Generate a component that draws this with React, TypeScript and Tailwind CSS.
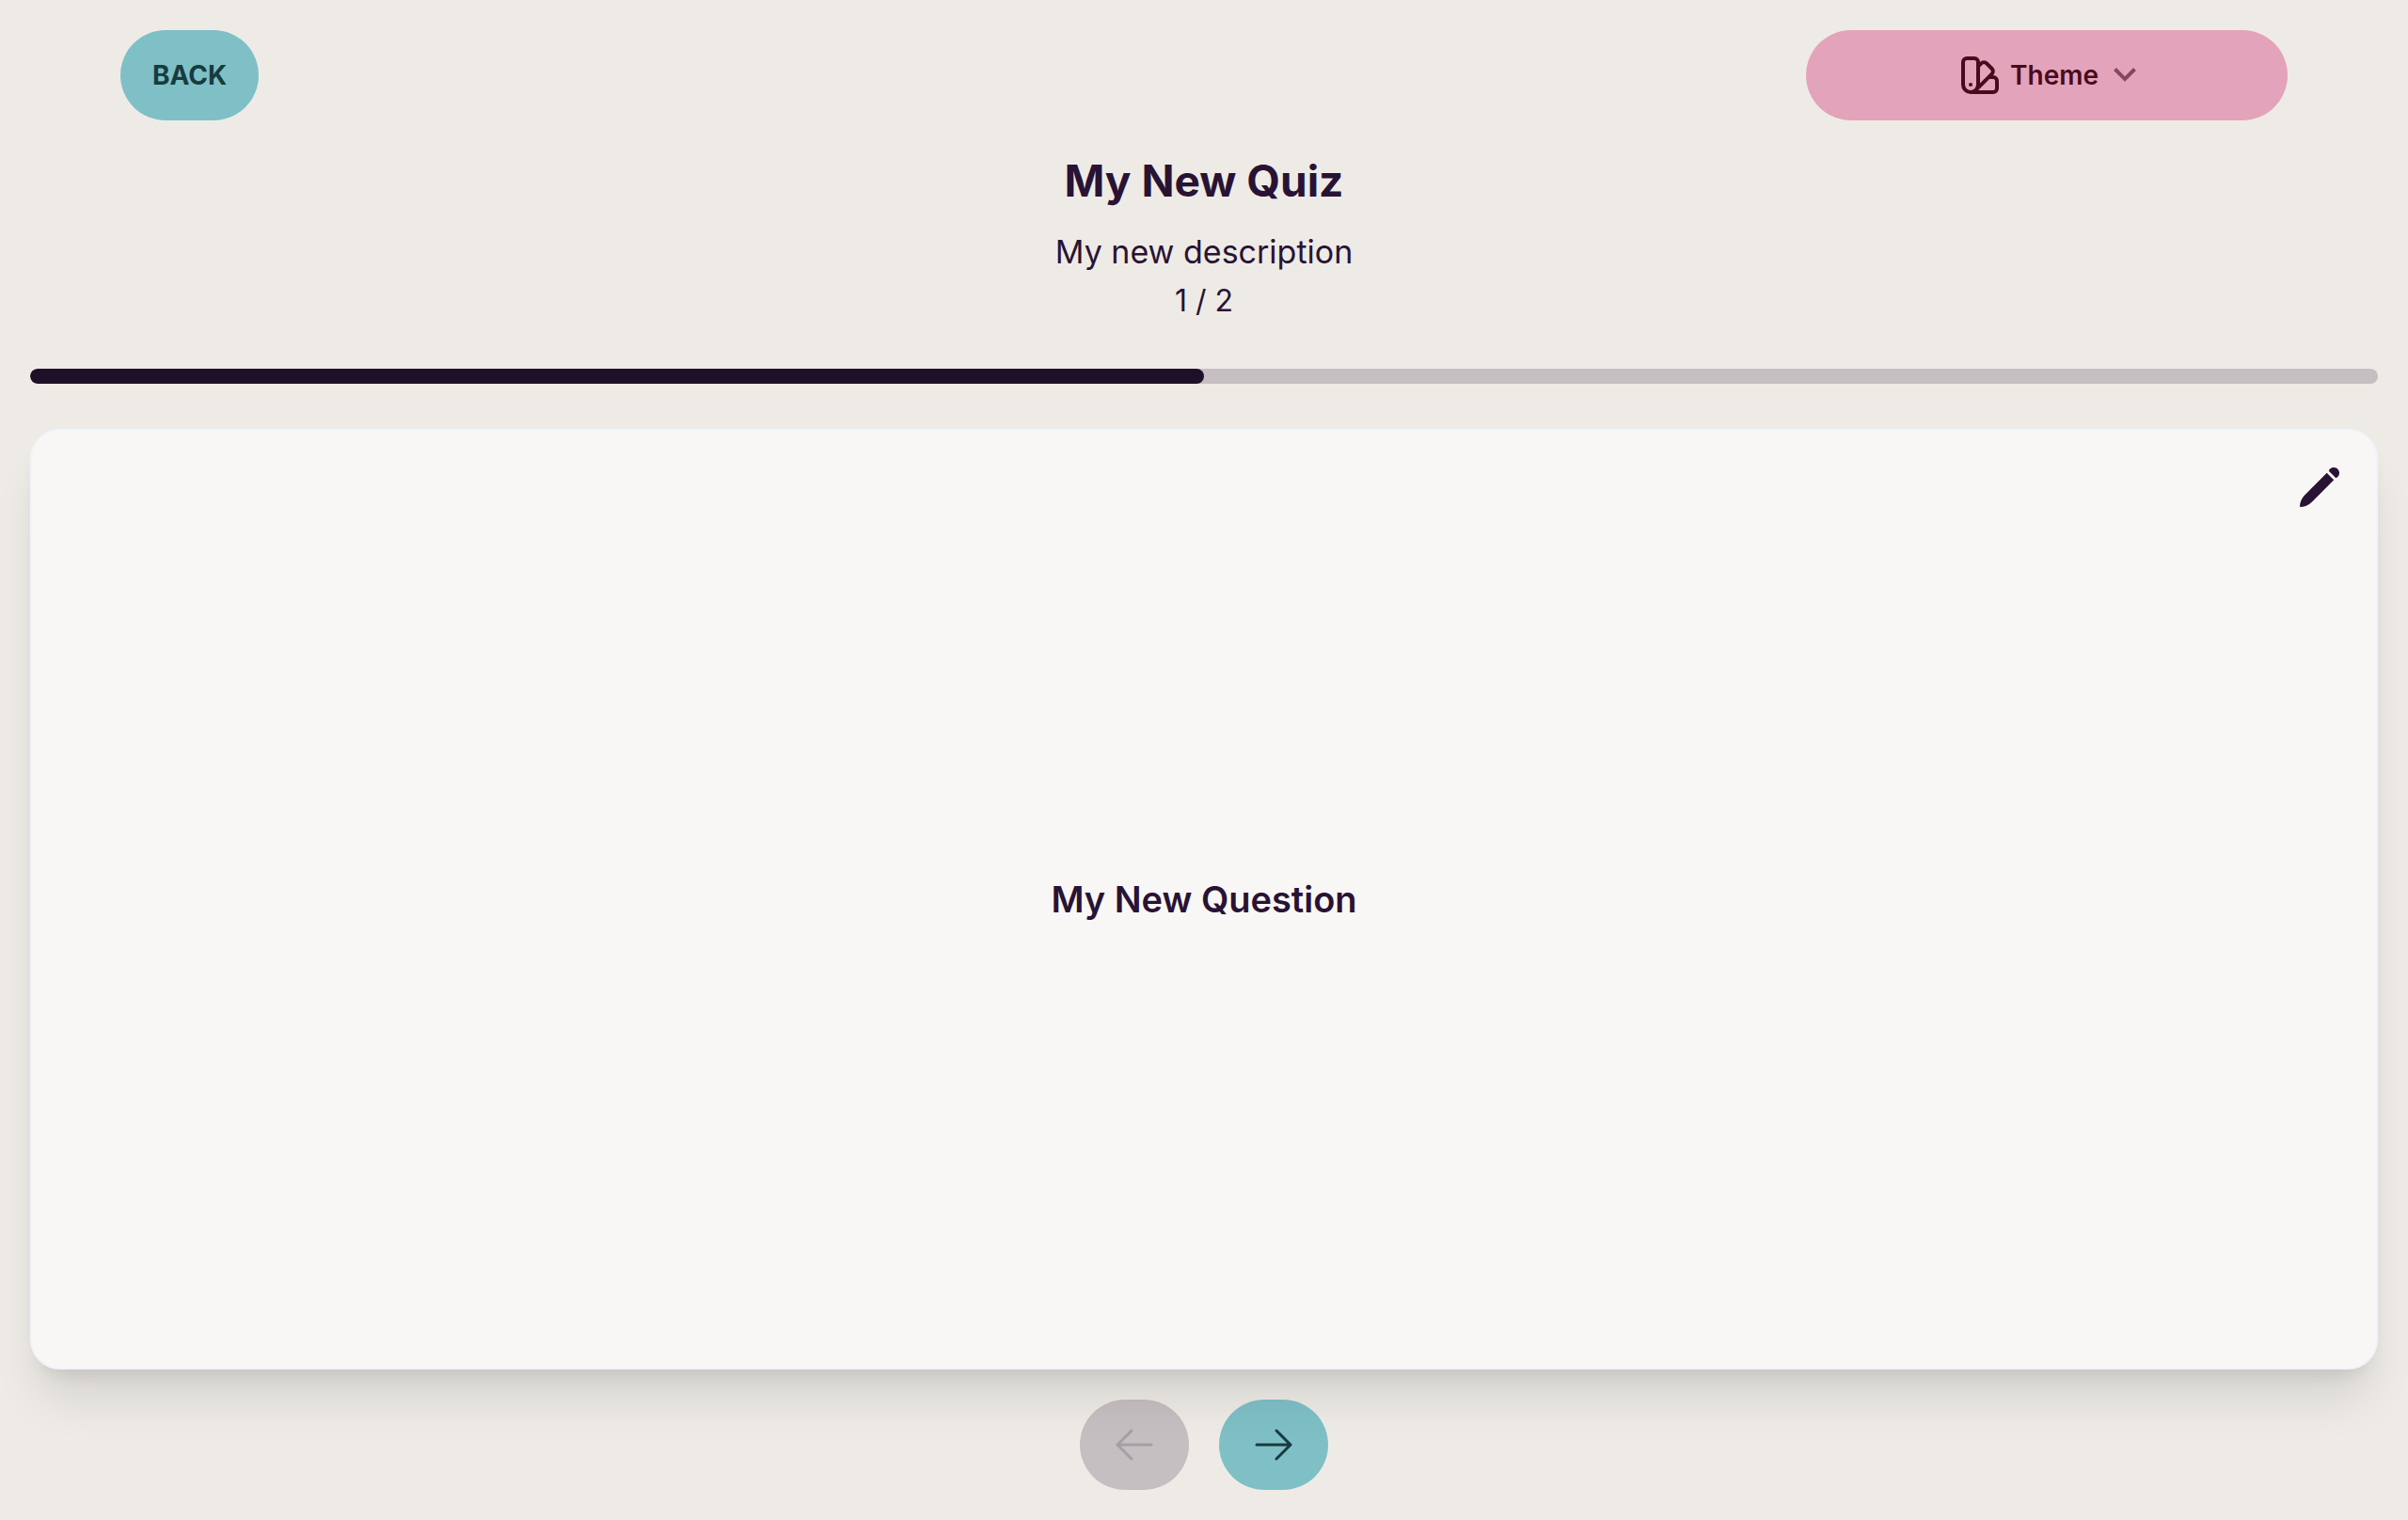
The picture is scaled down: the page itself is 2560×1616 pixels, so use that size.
import React from "react";

const BUTTON =
  "flex h-24 items-center justify-center rounded-full border-2 border-transparent px-8 text-[28px] leading-none";

function SwatchIcon() {
  return (
    <svg className="size-12 shrink-0" viewBox="0 0 24 24" fill="none" stroke="currentColor" strokeWidth="2" strokeLinecap="round" strokeLinejoin="round" aria-hidden="true">
      <path d="M7 21a4 4 0 01-4-4V5a2 2 0 012-2h4a2 2 0 012 2v12a4 4 0 01-4 4zm0 0h12a2 2 0 002-2v-4a2 2 0 00-2-2h-2.343M11 7.343l1.657-1.657a2 2 0 012.828 0l2.829 2.829a2 2 0 010 2.828l-8.486 8.485M7 17h.01" />
    </svg>
  );
}

function ChevronIcon() {
  return (
    <svg className="ml-2 size-6 shrink-0 fill-current opacity-60" viewBox="0 0 2048 2048" aria-hidden="true">
      <path d="M1799 349l242 241-1017 1017L7 590l242-241 775 775 775-775z" />
    </svg>
  );
}

function PencilIcon() {
  return (
    <svg className="size-12" viewBox="0 0 48 48" fill="currentColor" aria-hidden="true">
      <path d="M31.700 8.800L39.200 16.300L15.800 39.700C12.400 43 7.800 45 3 45C3 40.200 4.900 35.600 8.300 32.200Z" />
      <path d="M33.800 6.700A5.800 5.800 0 1 1 41.300 14.200Z" />
    </svg>
  );
}

function ArrowIcon({ d }: { d: string }) {
  return (
    <svg className="size-12" viewBox="0 0 24 24" fill="none" stroke="currentColor" strokeWidth="1.5" strokeLinecap="round" strokeLinejoin="round" aria-hidden="true">
      <path d={d} />
    </svg>
  );
}

function ProgressBar({ value, max }: { value: number; max: number }) {
  return (
    <div role="progressbar" aria-label="Quiz progress" aria-valuenow={value} aria-valuemax={max} className="h-4 w-full overflow-hidden rounded-full bg-[#c5bfc1]">
      <div className="h-full rounded-full bg-[#1f1029]" style={{ width: `${(value / max) * 100}%` }} />
    </div>
  );
}

export default function App() {
  return (
    <main className="flex min-h-screen flex-col bg-[#eeebe6] p-8 font-['Inter',sans-serif] text-[#291334]">
      <nav className="flex items-center justify-between px-24">
        <button type="button" className={`${BUTTON} bg-[#7ec0c6] font-bold text-[#183b3f]`}>
          BACK
        </button>
        <button type="button" aria-haspopup="menu" className={`${BUTTON} w-1/5 min-w-[512px] gap-2 bg-[#e3a3ba] font-semibold text-[#4a0a1d]`}>
          <SwatchIcon />
          Theme
          <ChevronIcon />
        </button>
      </nav>

      <header className="pt-8 text-center">
        <h1 className="text-[46px] leading-[64px] font-bold">My New Quiz</h1>
        <p className="mt-4 text-[34px] leading-[56px]">My new description</p>
        <p className="text-[32px] leading-[48px]">1 / 2</p>
      </header>

      <div className="mt-12">
        <ProgressBar value={1} max={2} />
      </div>

      <section className="relative z-10 mt-12 flex grow items-center justify-center rounded-[32px] border-2 border-[#f1f4fa] bg-[#f9f7f5] shadow-[0_40px_50px_-10px_rgba(0,0,0,0.1),0_16px_20px_-12px_rgba(0,0,0,0.1)]">
        <button type="button" aria-label="Edit question" className="absolute top-9 right-9">
          <PencilIcon />
        </button>
        <h2 className="text-[38px] leading-[56px] font-semibold">My New Question</h2>
      </section>

      <footer className="mt-8 flex justify-center gap-8">
        <button type="button" disabled aria-label="Previous question" className={`${BUTTON} bg-[#c5bfc1] text-[#a69fa6]`}>
          <ArrowIcon d="M10.5 19.5 3 12m0 0 7.5-7.5M3 12h18" />
        </button>
        <button type="button" aria-label="Next question" className={`${BUTTON} bg-[#7ec0c6] text-[#183b3f]`}>
          <ArrowIcon d="M13.5 4.5 21 12m0 0-7.5 7.5M21 12H3" />
        </button>
      </footer>
    </main>
  );
}
